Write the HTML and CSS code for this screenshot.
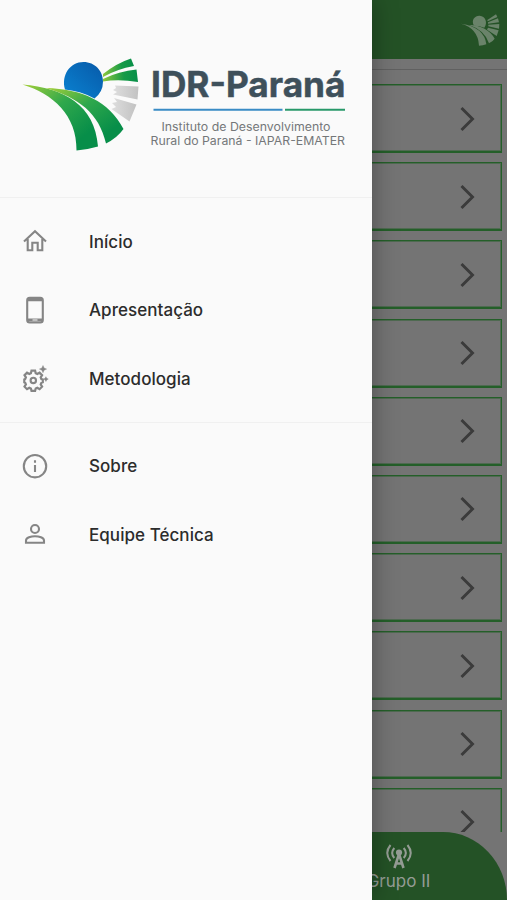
FILE: index.html
```html
<!DOCTYPE html>
<html lang="pt-BR">
<head>
<meta charset="utf-8">
<meta name="viewport" content="width=device-width, initial-scale=1">
<title>IDR-Paraná</title>
<link rel="stylesheet" href="styles.css">
</head>
<body>
<svg class="defs" aria-hidden="true">
  <symbol id="chevron" viewBox="0 0 16 26"><path d="M1.500 2 12.500 13 1.500 24" fill="none" stroke="currentColor" stroke-width="2.900"/></symbol>
</svg>
<div class="app">
  <header class="topbar">
    <svg class="mini-logo" viewBox="7 7 117 95" fill="currentColor">
      <path d="M46 40C36 22 50 9 63 10C80 11 88 30 77 46Q62 40 46 40Z"/>
      <path d="M7 34.500Q77 45 83 96Q73 100 61 100Q58 48 7 34.500Z"/>
      <path d="M31 38Q86 40 108 79Q102 88 91 93Q78 53 31 38Z"/>
      <path d="M86 23 112 6 116 14 87 27Z"/><path d="M88 30 118 18 121 30 88 34Z"/>
      <path d="M89 37 122 35 121 49 89 42Z"/><path d="M88 46 120 54 114 71 85 52Z"/>
    </svg>
  </header>
  <main class="list">
    <div class="card"><svg><use href="#chevron"/></svg></div>
    <div class="card"><svg><use href="#chevron"/></svg></div>
    <div class="card"><svg><use href="#chevron"/></svg></div>
    <div class="card"><svg><use href="#chevron"/></svg></div>
    <div class="card"><svg><use href="#chevron"/></svg></div>
    <div class="card"><svg><use href="#chevron"/></svg></div>
    <div class="card"><svg><use href="#chevron"/></svg></div>
    <div class="card"><svg><use href="#chevron"/></svg></div>
    <div class="card"><svg><use href="#chevron"/></svg></div>
    <div class="card"><svg><use href="#chevron"/></svg></div>
  </main>
  <nav class="tabs">
    <div class="tab">
      <svg width="26" height="25" viewBox="0 0 26 25" fill="none" stroke="currentColor" stroke-width="2">
        <path d="M4.500 1Q-2 9 4.500 17M8.300 4Q4 9 8.300 14M21.500 1Q28 9 21.500 17M17.700 4Q22 9 17.700 14"/>
        <path d="M8.500 24 13 10 17.500 24M10 19.500h6" stroke-width="2.600"/>
        <circle cx="13" cy="8.500" r="3.100" fill="currentColor" stroke="none"/>
      </svg>
      <span>Grupo II</span>
    </div>
  </nav>
</div>

<aside class="drawer">
  <div class="brand">
    <svg width="372" height="197" viewBox="0 0 372 197">
      <defs>
        <linearGradient id="leaf" x1="0" y1="0" x2=".8" y2=".8"><stop offset="0" stop-color="#a5cf38"/><stop offset=".5" stop-color="#2fa84c"/><stop offset="1" stop-color="#078e49"/></linearGradient>
        <linearGradient id="ray" x1="0" y1="0" x2="1" y2="0"><stop offset="0" stop-color="#8fc83e"/><stop offset=".6" stop-color="#159a47"/><stop offset="1" stop-color="#078f49"/></linearGradient>
        <linearGradient id="sun" x1="1" y1="0" x2="0" y2="1"><stop offset="0" stop-color="#0759a8"/><stop offset="1" stop-color="#0a83d2"/></linearGradient>
        <linearGradient id="silver"><stop offset="0" stop-color="#dedede"/><stop offset="1" stop-color="#c2c2c2"/></linearGradient>
      </defs>
      <path d="M65 89.500C61 75 70 62 83.500 62C95 62 103 71 103 81.500Q103 92 94.500 98.500Q81 91 65 89.500Z" fill="url(#sun)"/>
      <path d="M22.500 84.500C64 88 95 105 98 146.500Q88 149.500 76.500 150.500C77 115 53 94 22.500 84.500Z" fill="url(#leaf)"/>
      <path d="M46 88C82 89 109 101 123.500 129Q117 138 106 143.500C99 113 79 98 46 88Z" fill="url(#leaf)"/>
      <path d="M103 74Q117 63 131 58.500L134 66Q117 69 103 77Z" fill="url(#ray)"/>
      <path d="M103 79Q119 71 136.500 69.500L138 82Q119 79 103 81.500Z" fill="url(#ray)"/>
      <path d="M115 85.500 138.500 86.500 137.500 99.500 113 94.500 117 92 113 90 116 88Z" fill="url(#silver)"/>
      <path d="M114 98 136.500 104.500 129.500 121.500 111.500 109 116 107 112 103 117 102Z" fill="url(#silver)"/>
      <text class="brand-name" x="151" y="96.500" textLength="194.500" lengthAdjust="spacingAndGlyphs">IDR-Paraná</text>
      <path d="M153.500 109.800H282.500" stroke="#398bc5" stroke-width="2"/>
      <path d="M285 109.800H345" stroke="#28996a" stroke-width="2"/>
      <text class="brand-sub" x="161.500" y="130.500" textLength="169" lengthAdjust="spacingAndGlyphs">Instituto de Desenvolvimento</text>
      <text class="brand-sub" x="150.500" y="144.700" textLength="194.500" lengthAdjust="spacingAndGlyphs">Rural do Paraná - IAPAR-EMATER</text>
    </svg>
  </div>
  <ul class="menu">
    <li><svg viewBox="0 0 28 28"><path d="M3 14.500 14 4.200 25 14.500M6.700 12V23.200H11.300V15.700H16.700V23.200H21.300V12"/></svg><span>Início</span></li>
    <li><svg viewBox="0 0 28 28"><rect x="6.200" y="1.900" width="15.600" height="24.600" rx="2.500"/><path d="M6 3.700H22M6 24H22" stroke-width="3"/><path d="M11.500 24H16.500" stroke="#fafafa" stroke-width="1"/></svg><span>Apresentação</span></li>
    <li><svg viewBox="0 0 28 28"><path transform="translate(.8 1)" d="M9.700 5.700h3.600l.6 2.600 1.600.7 2.300-1.400 2.500 2.500-1.400 2.300.7 1.600 1.400.5v2.800l-1.400.5-.7 1.600 1.400 2.300-2.500 2.500-2.300-1.400-1.600.7-.6 2.300H9.700l-.6-2.300-1.600-.7-2.300 1.400-2.500-2.500 1.400-2.300-.7-1.600-.9-.5v-2.800l.9-.5.700-1.600-1.400-2.300 2.500-2.500L7.500 9l1.600-.7Z" stroke-width="2.200"/><circle cx="12.300" cy="16.400" r="2.700"/><path d="m22 1.500 1.100 2.500L25.600 5.100l-2.500 1.100L22 8.700l-1.100-2.500-2.500-1.100 2.500-1.100ZM24.900 12.700l.8 1.600 1.600.8-1.600.8-.8 1.600-.8-1.600-1.600-.8 1.600-.8Z" fill="currentColor" stroke-width=".4"/></svg><span>Metodologia</span></li>
  </ul>
  <ul class="menu menu-info">
    <li><svg viewBox="0 0 28 28"><circle cx="14" cy="14.200" r="11.200"/><path d="M14 13V20M14 8.300V10.700"/></svg><span>Sobre</span></li>
    <li><svg viewBox="0 0 28 28"><circle cx="14" cy="9" r="4"/><path d="M5 22.700V20.500C5 17.800 10 16.200 14 16.200S23 17.800 23 20.500V22.700Z"/></svg><span>Equipe Técnica</span></li>
  </ul>
</aside>
</body>
</html>
```
FILE: styles.css
```css
* { box-sizing: border-box; }
body {
  margin: 0;
  height: 900px;
  position: relative;
  overflow: hidden;
  font-family: Inter, "Liberation Sans", sans-serif;
  background: #747474;
}
.defs { position: absolute; width: 0; height: 0; }
.app { height: 900px; display: flex; flex-direction: column; }
.topbar {
  height: 59px;
  flex: none;
  display: flex;
  justify-content: flex-end;
  padding: 14px 7px 0 0;
  background: #245226;
  color: #6a836a;
}
.mini-logo { width: 39px; height: 33px; }
.list {
  flex: 1;
  min-height: 0;
  overflow: hidden;
  margin-top: 10px;
  padding: 14px 5px 0;
  border-top: 1px solid #606060;
  display: flex;
  flex-direction: column;
  gap: 9.200px;
}
.card {
  height: 69px;
  flex: none;
  display: flex;
  align-items: center;
  justify-content: flex-end;
  padding-right: 25px;
  border: 1px solid #245f29;
  border-bottom-width: 2px;
  box-shadow: inset 0 0 0 1px rgba(36, 95, 41, .45);
  color: #3b3b3b;
}
.card svg { width: 16px; height: 26px; margin-top: 1px; }
.tabs {
  height: 68px;
  flex: none;
  display: flex;
  justify-content: flex-end;
  background: #245226;
  border-top-right-radius: 64px 68px;
  color: #949c94;
}
.tab {
  width: 217px;
  display: flex;
  flex-direction: column;
  align-items: center;
  padding-top: 12px;
  font-size: 17px;
  line-height: 22px;
}
.tab span { margin-top: 1px; }
.drawer {
  position: absolute;
  top: 0;
  left: 0;
  width: 372.400px;
  height: 900px;
  background: #fafafa;
  box-shadow: 0 0 24px rgba(0, 0, 0, .34);
}
.brand { height: 198px; border-bottom: 1px solid #f0f0f0; }
.brand svg { display: block; }
.brand-name {
  font-size: 35px;
  font-weight: 700;
  fill: #3e505b;
  stroke: #3e505b;
  stroke-width: .5px;
}
.brand-sub { font-size: 11.200px; fill: #747779; }
.menu {
  list-style: none;
  margin: 0;
  padding: 9px 21px 9px;
  border-bottom: 1px solid #f0f0f0;
}
.menu-info { border: 0; }
.menu li {
  height: 68.500px;
  display: flex;
  align-items: center;
  gap: 40px;
  color: #2c2c2c;
  font-size: 17px;
  font-weight: 500;
  letter-spacing: .05px;
}
.menu span { padding-top: 1px; }
.menu svg {
  width: 28px;
  height: 28px;
  fill: none;
  stroke: currentColor;
  stroke-width: 2.100;
  color: #858585;
}
```
